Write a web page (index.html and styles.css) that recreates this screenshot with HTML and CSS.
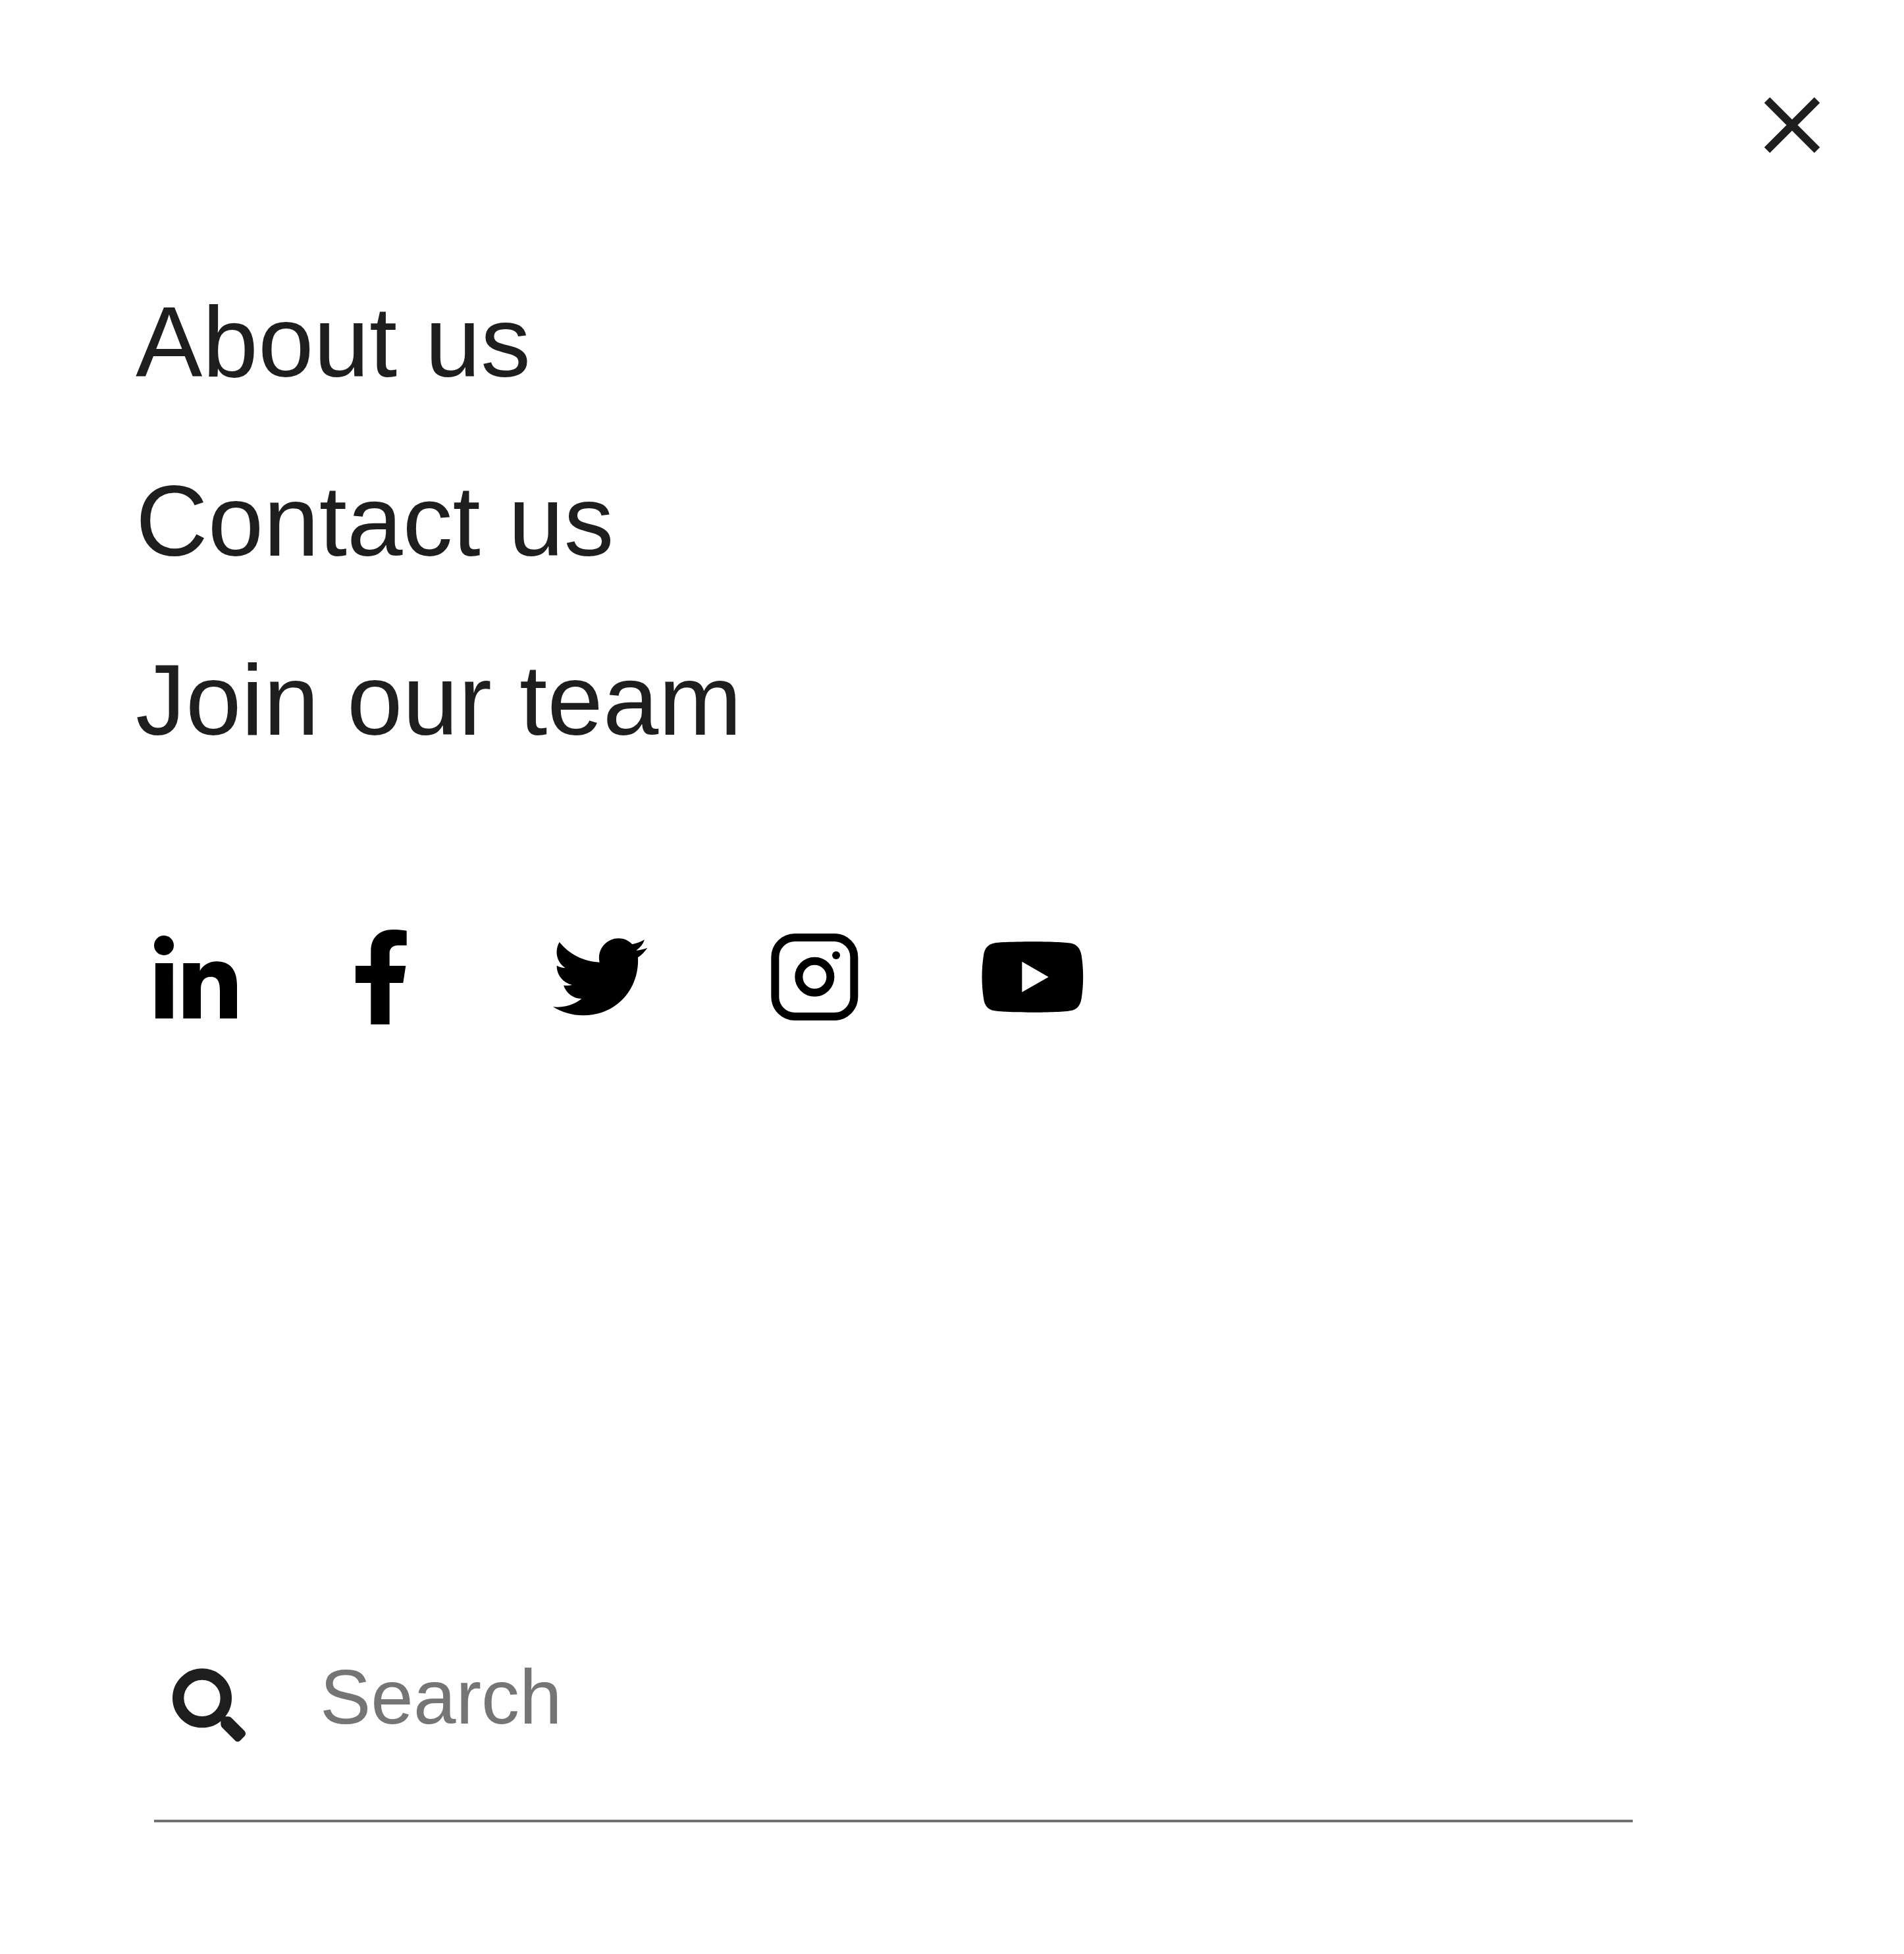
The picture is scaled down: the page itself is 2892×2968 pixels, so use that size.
FILE: index.html
```html
<!DOCTYPE html>
<html lang="en">
<head>
  <meta charset="utf-8">
  <meta name="viewport" content="width=device-width, initial-scale=1">
  <title>Menu</title>
  <link rel="stylesheet" href="styles.css">
</head>
<body>
  <div class="menu">
    <header class="menu-header">
      <button class="close" type="button" aria-label="Close menu">
        <svg viewBox="0 0 84 84" aria-hidden="true"><path d="M4 4 80 80M80 4 4 80"/></svg>
      </button>
    </header>

    <nav class="nav" aria-label="Main">
      <ul class="nav-list">
        <li><a href="#about">About us</a></li>
        <li><a href="#contact">Contact us</a></li>
        <li><a href="#join">Join our team</a></li>
      </ul>
    </nav>

    <ul class="social">
      <li><a href="#linkedin" aria-label="LinkedIn">
        <svg width="126" height="144" viewBox="72 66 378 432" aria-hidden="true">
          <circle cx="117" cy="138" r="45"/>
          <path d="M78 219h80v252H78zM205 219h76v35c14-26 42-43 77-43 62 0 92 42 92 108v152h-78V345c0-38-8-64-41-64-31 0-46 21-46 57v133h-80z"/>
        </svg>
      </a></li>
      <li><a href="#facebook" aria-label="Facebook">
        <svg width="120" height="144" viewBox="90 66 360 432" aria-hidden="true">
          <path d="M160 498V309H90v-78h70v-68c0-60 38-97 100-97 22 0 44 2 63 5v67h-40c-26 0-38 16-38 35v58h74l-12 78h-62v189z"/>
        </svg>
      </a></li>
      <li><a href="#twitter" aria-label="Twitter">
        <svg width="151" height="144" viewBox="60 36 453 432" aria-hidden="true">
          <path d="M490 119c-11 17-26 32-43 44 7 137-92 264-250 264-50 0-97-14-137-39 47 5 94-8 130-37-39-1-70-26-82-61 13 2 27 2 39-2-41-9-71-45-70-88 12 7 25 10 39 11C77 185 65 136 89 93c45 55 110 89 183 92-13-55 29-109 86-109 25 0 47 10 63 27 20-4 39-11 56-21-7 21-20 37-38 49 18-2 35-6 51-12z"/>
        </svg>
      </a></li>
      <li><a href="#instagram" aria-label="Instagram">
        <svg width="140" height="144" viewBox="63 36 420 432" aria-hidden="true">
          <rect class="line" x="82" y="72" width="360" height="360" rx="90"/>
          <circle class="line" cx="262" cy="251" r="72"/>
          <circle cx="360" cy="153" r="18"/>
        </svg>
      </a></li>
      <li><a href="#youtube" aria-label="YouTube">
        <svg width="155" height="144" viewBox="64 36 465 432" aria-hidden="true">
          <path fill-rule="evenodd" d="M119 98C175 88 416 88 472 98 500 104 514 124 519 153 529 218 529 285 519 350 514 380 500 400 472 405 416 416 175 416 119 405 91 400 77 380 73 350 63 285 63 218 73 153 77 124 91 104 119 98zM248 182v139l121-69z"/>
        </svg>
      </a></li>
    </ul>

    <form class="search" role="search">
      <button class="search-button" type="submit" aria-label="Submit search">
        <svg viewBox="126 104 336 336" aria-hidden="true">
          <circle class="lens" cx="261" cy="240" r="109"/>
          <path d="M346 324h34q9 0 16 7l58 58q11 13 0 25l-20 20q-11 9-22 0l-60-60q-6-7-6-14z"/>
        </svg>
      </button>
      <input class="search-input" type="search" placeholder="Search" aria-label="Search">
    </form>
  </div>
</body>
</html>
```
FILE: styles.css
```css
* {
  box-sizing: border-box;
}

body {
  margin: 0;
  background: #fefefe;
  color: #1e1e1e;
  font-family: "Liberation Sans", Arial, sans-serif;
}

svg {
  display: block;
}

ul {
  margin: 0;
  padding: 0;
  list-style: none;
}

a {
  color: inherit;
  text-decoration: none;
}

button {
  padding: 0;
  border: 0;
  background: none;
  color: inherit;
  cursor: pointer;
}

.menu {
  display: flex;
  flex-direction: column;
  min-height: 100vh;
  padding: 148px 128px 200px 206px;
}

.menu-header {
  display: flex;
  justify-content: flex-end;
}

.close svg {
  width: 84px;
  height: 84px;
  stroke: currentColor;
  stroke-width: 12;
}

.nav {
  margin-top: 211px;
}

.nav-list {
  display: flex;
  flex-direction: column;
  gap: 120px;
  font-size: 152px;
  line-height: 152px;
}

.social {
  display: flex;
  gap: 180px;
  margin: 273px 0 120px 28px;
  color: #000;
}

.social svg {
  fill: currentColor;
}

.social .line {
  fill: none;
  stroke: currentColor;
  stroke-width: 36;
}

.search {
  display: flex;
  align-items: flex-end;
  gap: 112px;
  margin: auto 284px 0 28px;
  padding: 0 28px 118px;
  border-bottom: 4px solid #707070;
}

.search-button svg {
  width: 112px;
  height: 112px;
  fill: currentColor;
}

.search-button .lens {
  fill: none;
  stroke: currentColor;
  stroke-width: 52;
}

.search-input {
  flex: 1;
  min-width: 0;
  height: 136px;
  padding: 0;
  border: 0;
  outline: 0;
  background: none;
  color: inherit;
  font: 116px/136px "Liberation Sans", Arial, sans-serif;
  appearance: none;
}

.search-input::placeholder {
  color: #757575;
  opacity: 1;
}
```
